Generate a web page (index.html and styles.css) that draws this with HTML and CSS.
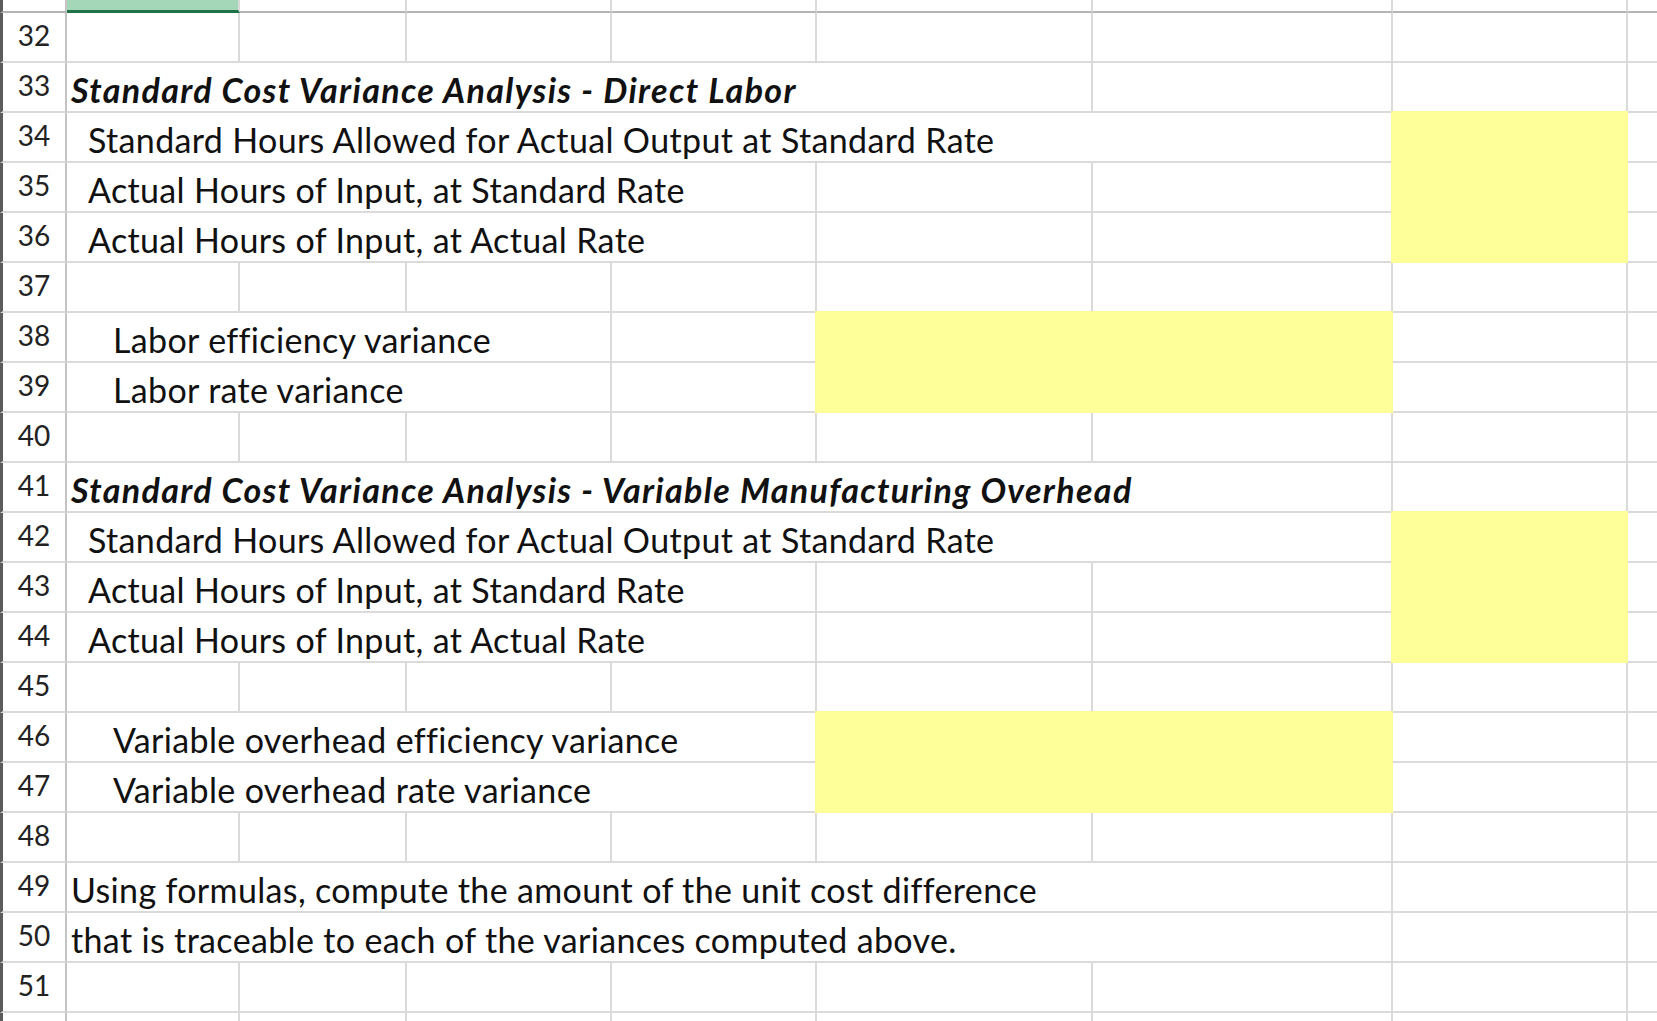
FILE: index.html
```html
<!DOCTYPE html>
<html lang="en">
<head>
<meta charset="utf-8">
<title>Standard Cost Variance Analysis</title>
<link rel="stylesheet" href="styles.css">
</head>
<body>
<div class="sheet">
  <!-- partial row 31 -->
  <div class="c h top"></div><div class="c top sel"></div><div class="c top"></div><div class="c top"></div><div class="c top"></div><div class="c top"></div><div class="c top"></div><div class="c top"></div><div class="c top"></div>
  <!-- 32 -->
  <div class="c h">32</div><div class="c"></div><div class="c"></div><div class="c"></div><div class="c"></div><div class="c"></div><div class="c"></div><div class="c"></div><div class="c"></div>
  <!-- 33 -->
  <div class="c h">33</div><div class="c t b s5">Standard Cost Variance Analysis - Direct Labor</div><div class="c"></div><div class="c"></div><div class="c"></div>
  <!-- 34 -->
  <div class="c h">34</div><div class="c t i1 s6">Standard Hours Allowed for Actual Output at Standard Rate</div><div class="c y y1"></div><div class="c"></div>
  <!-- 35 -->
  <div class="c h">35</div><div class="c t i1 s4">Actual Hours of Input, at Standard Rate</div><div class="c"></div><div class="c"></div><div class="c"></div>
  <!-- 36 -->
  <div class="c h">36</div><div class="c t i1 s4">Actual Hours of Input, at Actual Rate</div><div class="c"></div><div class="c"></div><div class="c"></div>
  <!-- 37 -->
  <div class="c h">37</div><div class="c"></div><div class="c"></div><div class="c"></div><div class="c"></div><div class="c"></div><div class="c"></div><div class="c"></div><div class="c"></div>
  <!-- 38 -->
  <div class="c h">38</div><div class="c t i2 s3">Labor efficiency variance</div><div class="c"></div><div class="c y y2"></div><div class="c"></div><div class="c"></div>
  <!-- 39 -->
  <div class="c h">39</div><div class="c t i2 s3">Labor rate variance</div><div class="c"></div><div class="c"></div><div class="c"></div>
  <!-- 40 -->
  <div class="c h">40</div><div class="c"></div><div class="c"></div><div class="c"></div><div class="c"></div><div class="c"></div><div class="c"></div><div class="c"></div><div class="c"></div>
  <!-- 41 -->
  <div class="c h">41</div><div class="c t b s6">Standard Cost Variance Analysis - Variable Manufacturing Overhead</div><div class="c"></div><div class="c"></div>
  <!-- 42 -->
  <div class="c h">42</div><div class="c t i1 s6">Standard Hours Allowed for Actual Output at Standard Rate</div><div class="c y y1"></div><div class="c"></div>
  <!-- 43 -->
  <div class="c h">43</div><div class="c t i1 s4">Actual Hours of Input, at Standard Rate</div><div class="c"></div><div class="c"></div><div class="c"></div>
  <!-- 44 -->
  <div class="c h">44</div><div class="c t i1 s4">Actual Hours of Input, at Actual Rate</div><div class="c"></div><div class="c"></div><div class="c"></div>
  <!-- 45 -->
  <div class="c h">45</div><div class="c"></div><div class="c"></div><div class="c"></div><div class="c"></div><div class="c"></div><div class="c"></div><div class="c"></div><div class="c"></div>
  <!-- 46 -->
  <div class="c h">46</div><div class="c t i2 s4">Variable overhead efficiency variance</div><div class="c y y2"></div><div class="c"></div><div class="c"></div>
  <!-- 47 -->
  <div class="c h">47</div><div class="c t i2 s4">Variable overhead rate variance</div><div class="c"></div><div class="c"></div>
  <!-- 48 -->
  <div class="c h">48</div><div class="c"></div><div class="c"></div><div class="c"></div><div class="c"></div><div class="c"></div><div class="c"></div><div class="c"></div><div class="c"></div>
  <!-- 49 -->
  <div class="c h">49</div><div class="c t s6">Using formulas, compute the amount of the unit cost difference</div><div class="c"></div><div class="c"></div>
  <!-- 50 -->
  <div class="c h">50</div><div class="c t s6">that is traceable to each of the variances computed above.</div><div class="c"></div><div class="c"></div>
  <!-- 51 -->
  <div class="c h">51</div><div class="c"></div><div class="c"></div><div class="c"></div><div class="c"></div><div class="c"></div><div class="c"></div><div class="c"></div><div class="c"></div>
  <!-- 52 (partial, below the visible area) -->
  <div class="c h"></div><div class="c"></div><div class="c"></div><div class="c"></div><div class="c"></div><div class="c"></div><div class="c"></div><div class="c"></div><div class="c"></div>
</div>
</body>
</html>
```

FILE: styles.css
```css
html, body {
  margin: 0;
  padding: 0;
  background: #ffffff;
  overflow: hidden;
}

body {
  width: 1657px;
  height: 1021px;
}

.sheet {
  display: grid;
  grid-template-columns: 67px 173px 167px 205px 205px 276px 300px 235px 60px;
  grid-template-rows: 13px repeat(21, 50px);
  font-family: "Lato", "Noto Sans", sans-serif;
  color: #111111;
}

.c {
  box-sizing: border-box;
  border-right: 2px solid #dadada;
  border-bottom: 2px solid #dadada;
  min-width: 0;
}

.h {
  border-left: 3px solid #5c5c5c;
  border-right-color: #c4c4c4;
  display: flex;
  align-items: center;
  justify-content: center;
  font-size: 28px;
  color: #222222;
  padding-bottom: 4px;
}

.top {
  border-bottom-color: #b4b4b4;
}

.sel {
  background: #a3d7b7;
  border-bottom: 3px solid #1f7345;
}

.t {
  display: flex;
  align-items: flex-end;
  font-size: 34px;
  line-height: 34px;
  letter-spacing: 0.35px;
  padding: 0 0 4px 4px;
  white-space: nowrap;
}

.i1 {
  padding-left: 21px;
}

.i2 {
  padding-left: 46px;
}

.b {
  font-weight: 700;
  font-style: italic;
  letter-spacing: 1.35px;
}

.s3 { grid-column: span 3; }
.s4 { grid-column: span 4; }
.s5 { grid-column: span 5; }
.s6 { grid-column: span 6; }

.y {
  background: #ffff99;
  border-color: #ffff99;
  margin: -2px 0 0 -2px;
  z-index: 1;
}

.y1 {
  grid-row: span 3;
}

.y2 {
  grid-row: span 2;
  grid-column: span 2;
}
```
